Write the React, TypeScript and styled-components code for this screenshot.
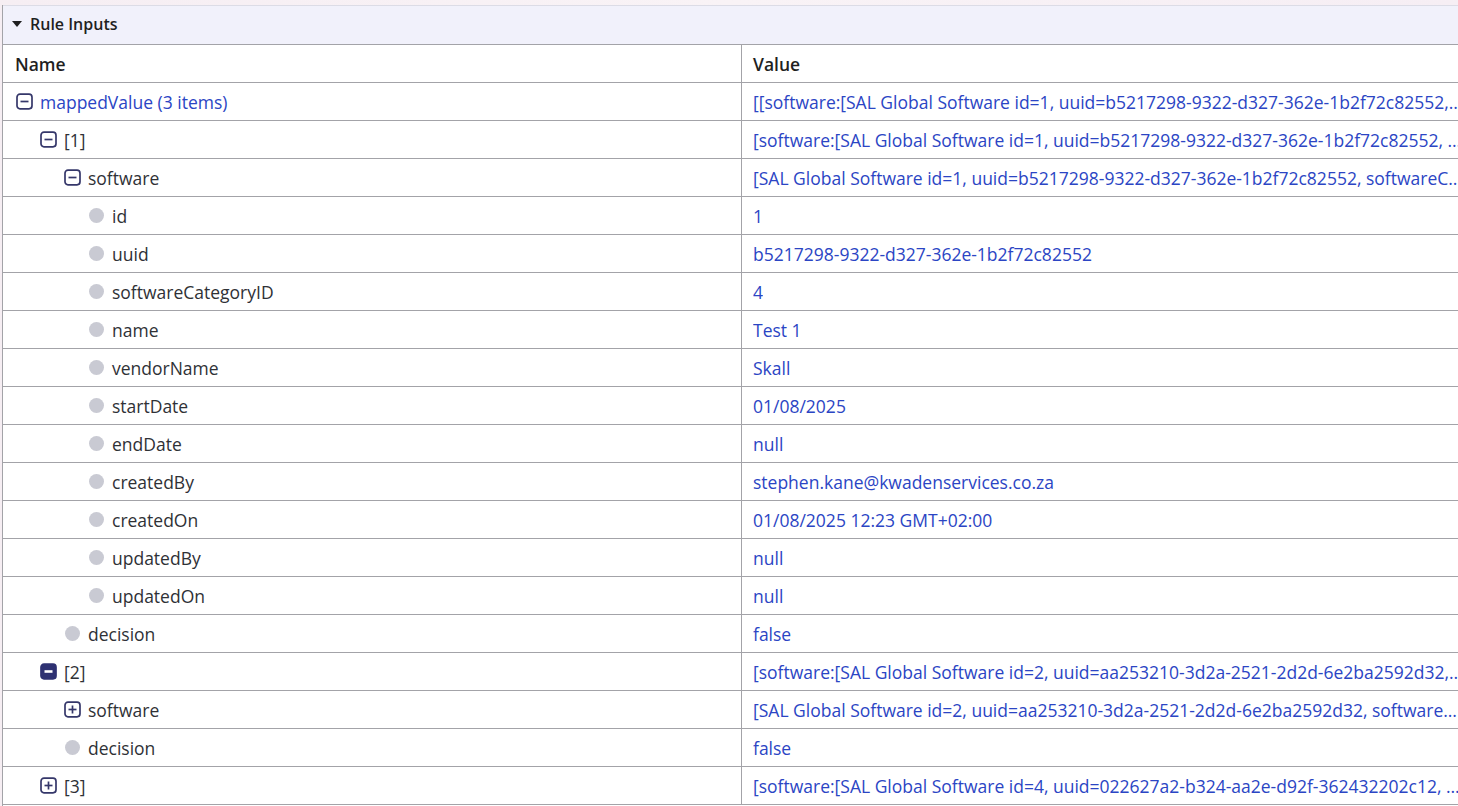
import React from "react";
import styled, { createGlobalStyle, css } from "styled-components";

const Global = createGlobalStyle`
  html, body { margin: 0; padding: 0; background: #fff; overflow: hidden; }
  body { font-family: "Open Sans", "Noto Sans", sans-serif; }
`;

const Page = styled.div`
  width: 1458px;
  height: 806px;
  overflow: hidden;
  background: linear-gradient(90deg, #f6eef3, #f9f3f6 50%, #f6eef4);
  padding-top: 5px;
  box-sizing: border-box;
`;

const Panel = styled.div`
  margin-left: 2px;
  width: 1470px;
  border-left: 1px solid #a3a3a8;
  background: #fff;
  height: 100%;
`;

const SectionHeader = styled.div`
  height: 36px;
  display: flex;
  align-items: center;
  gap: 8px;
  padding-left: 9px;
  padding-bottom: 2px;
  background: #f1f1fb;
  border-top: 1px solid #dcdce6;
  border-bottom: 1px solid #a3a3a8;
  font-size: 16px;
  font-weight: 600;
  color: #1f1f1f;
`;

const Caret = styled.span`
  width: 0;
  height: 0;
  border-left: 5px solid transparent;
  border-right: 5px solid transparent;
  border-top: 6px solid #1f1f1f;
`;

const Grid = styled.div`
  display: grid;
  grid-template-columns: 738px 1fr;
`;

const Cell = styled.div<{ $head?: boolean; $value?: boolean }>`
  height: 37px;
  border-bottom: 1px solid #a3a3a8;
  display: flex;
  align-items: center;
  box-sizing: content-box;
  font-size: 17.5px;
  color: ${(p) => (p.$head ? "#1f1f1f" : "#2f3136")};
  font-weight: ${(p) => (p.$head ? 600 : 400)};
  padding-left: 12px;
  white-space: nowrap;
  min-width: 0;
  ${(p) =>
    p.$value &&
    css`
      border-left: 1px solid #a3a3a8;
      padding-left: 11px;
      padding-right: 10px;
      color: #2b45c4;
    `}
`;

const Ellipsis = styled.span`
  overflow: hidden;
  text-overflow: ellipsis;
  white-space: nowrap;
  display: block;
  min-width: 0;
`;

const NameWrap = styled.div<{ $level: number; $blue?: boolean }>`
  display: flex;
  align-items: center;
  gap: 7px;
  padding-left: ${(p) => 1 + p.$level * 24}px;
  color: ${(p) => (p.$blue ? "#2b45c4" : "#2f3136")};
`;

const Dot = styled.span`
  width: 15px;
  height: 15px;
  border-radius: 50%;
  background: #c9cad3;
  margin: 0 1px;
  flex: none;
`;

type IconKind = "minus" | "plus" | "minusFilled" | "dot";

const ToggleIcon: React.FC<{ kind: IconKind }> = ({ kind }) => {
  if (kind === "dot") return <Dot />;
  const filled = kind === "minusFilled";
  return (
    <svg width="17" height="17" viewBox="0 0 17 17" style={{ flex: "none" }}>
      <rect
        x="1"
        y="1.2"
        width="15"
        height="14.6"
        rx="3"
        fill={filled ? "#2e3172" : "none"}
        stroke={filled ? "#2e3172" : "#35376a"}
        strokeWidth="1.7"
      />
      <line x1="4.5" y1="8.5" x2="12.5" y2="8.5" stroke={filled ? "#fff" : "#35376a"} strokeWidth={filled ? 2.6 : 1.7} />
      {kind === "plus" && <line x1="8.5" y1="4.5" x2="8.5" y2="12.5" stroke="#35376a" strokeWidth="1.7" />}
    </svg>
  );
};

type Row = { level: number; icon: IconKind; name: string; value: string; blue?: boolean };

const rows: Row[] = [
  {
    level: 0,
    icon: "minus",
    name: "mappedValue (3 items)",
    blue: true,
    value:
      "[[software:[SAL Global Software id=1, uuid=b5217298-9322-d327-362e-1b2f72c82552, softwareCategoryID=4, name=Test 1]]]",
  },
  {
    level: 1,
    icon: "minus",
    name: "[1]",
    value:
      "[software:[SAL Global Software id=1, uuid=b5217298-9322-d327-362e-1b2f72c82552, softwareCategoryID=4, name=Test 1]]",
  },
  {
    level: 2,
    icon: "minus",
    name: "software",
    value: "[SAL Global Software id=1, uuid=b5217298-9322-d327-362e-1b2f72c82552, softwareCategoryID=4, name=Test 1]",
  },
  { level: 3, icon: "dot", name: "id", value: "1" },
  { level: 3, icon: "dot", name: "uuid", value: "b5217298-9322-d327-362e-1b2f72c82552" },
  { level: 3, icon: "dot", name: "softwareCategoryID", value: "4" },
  { level: 3, icon: "dot", name: "name", value: "Test 1" },
  { level: 3, icon: "dot", name: "vendorName", value: "Skall" },
  { level: 3, icon: "dot", name: "startDate", value: "01/08/2025" },
  { level: 3, icon: "dot", name: "endDate", value: "null" },
  { level: 3, icon: "dot", name: "createdBy", value: "stephen.kane@kwadenservices.co.za" },
  { level: 3, icon: "dot", name: "createdOn", value: "01/08/2025 12:23 GMT+02:00" },
  { level: 3, icon: "dot", name: "updatedBy", value: "null" },
  { level: 3, icon: "dot", name: "updatedOn", value: "null" },
  { level: 2, icon: "dot", name: "decision", value: "false" },
  {
    level: 1,
    icon: "minusFilled",
    name: "[2]",
    value:
      "[software:[SAL Global Software id=2, uuid=aa253210-3d2a-2521-2d2d-6e2ba2592d32, softwareCategoryID=4, name=Test 2]]",
  },
  {
    level: 2,
    icon: "plus",
    name: "software",
    value: "[SAL Global Software id=2, uuid=aa253210-3d2a-2521-2d2d-6e2ba2592d32, softwareCategoryID=4, name=Test 2]",
  },
  { level: 2, icon: "dot", name: "decision", value: "false" },
  {
    level: 1,
    icon: "plus",
    name: "[3]",
    value:
      "[software:[SAL Global Software id=4, uuid=022627a2-b324-aa2e-d92f-362432202c12, softwareCategoryID=4, name=Test 4]]",
  },
];

export default function App() {
  return (
    <Page>
      <Global />
      <Panel>
        <SectionHeader>
          <Caret />
          Rule Inputs
        </SectionHeader>
        <Grid>
          <Cell $head>Name</Cell>
          <Cell $head $value style={{ color: "#1f1f1f" }}>
            Value
          </Cell>
          {rows.map((r, i) => (
            <React.Fragment key={i}>
              <Cell>
                <NameWrap $level={r.level} $blue={r.blue}>
                  <ToggleIcon kind={r.icon} />
                  {r.name}
                </NameWrap>
              </Cell>
              <Cell $value>
                <Ellipsis>{r.value}</Ellipsis>
              </Cell>
            </React.Fragment>
          ))}
        </Grid>
      </Panel>
    </Page>
  );
}
